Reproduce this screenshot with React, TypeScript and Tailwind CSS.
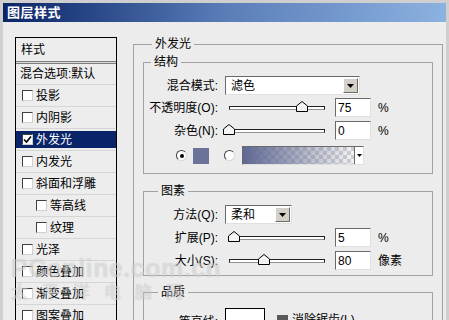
import React from "react";

const font = "font-['Liberation_Sans','Noto_Sans_CJK_SC',sans-serif]";

function Check({ on = false }: { on?: boolean }) {
  return (
    <span className="inline-flex h-[11px] w-[11px] shrink-0 items-center justify-center border border-t-[#404040] border-l-[#404040] border-r-[#d0d0d0] border-b-[#d0d0d0] bg-white">
      {on && (
        <svg width="9" height="9" viewBox="0 0 9 9">
          <path d="M1 4.5 L3.5 7 L8 1.5" fill="none" stroke="#000" strokeWidth="1.6" />
        </svg>
      )}
    </span>
  );
}

function Radio({ on = false }: { on?: boolean }) {
  return (
    <span className="inline-flex h-[11px] w-[11px] shrink-0 items-center justify-center rounded-full border border-t-[#404040] border-l-[#404040] border-r-[#d8d8d8] border-b-[#d8d8d8] bg-white">
      {on && <span className="h-[4px] w-[4px] rounded-full bg-black" />}
    </span>
  );
}

function Arrow() {
  return (
    <span className="flex h-[15px] w-[15px] shrink-0 items-center justify-center border border-t-white border-l-white border-r-[#6a6a6a] border-b-[#6a6a6a] bg-[#d4d0c8]">
      <svg width="7" height="4" viewBox="0 0 7 4">
        <path d="M0 0 H7 L3.5 4 Z" fill="#000" />
      </svg>
    </span>
  );
}

function Select({ value, w }: { value: string; w: string }) {
  return (
    <div className={`flex h-[19px] items-center justify-between border border-t-[#6a6a6a] border-l-[#6a6a6a] border-r-[#e0e0e0] border-b-[#e0e0e0] bg-white pl-[5px] pr-[1px] ${w}`}>
      <span className="text-[12px] leading-none text-black">{value}</span>
      <Arrow />
    </div>
  );
}

function Slider({ pos }: { pos: number }) {
  return (
    <div className="relative ml-[4px] h-[12px] w-[96px] shrink-0">
      <div className="absolute left-0 right-0 top-[4px] h-[4px] border border-[#202020] border-b-[#909090] bg-white" />
      <svg
        className="absolute top-[-1px]"
        style={{ left: pos - 6 }}
        width="12"
        height="11"
        viewBox="0 0 12 11"
      >
        <path d="M6 0.5 L11.5 5 V10.5 H0.5 V5 Z" fill="#f4f4f4" stroke="#000" />
      </svg>
    </div>
  );
}

function Field({ value }: { value: string }) {
  return (
    <div className="ml-[10px] flex h-[19px] w-[36px] items-center border border-t-[#6a6a6a] border-l-[#6a6a6a] border-r-[#e0e0e0] border-b-[#e0e0e0] bg-white pl-[2px] text-[12px] leading-none">
      {value}
    </div>
  );
}

function SliderRow({ label, pos, value, unit }: { label: string; pos: number; value: string; unit: string }) {
  return (
    <div className="flex h-[19px] items-center">
      <span className="w-[74px] text-right text-[12px] leading-none">{label}</span>
      <span className="w-[7px]" />
      <Slider pos={pos} />
      <Field value={value} />
      <span className="ml-[7px] text-[12px] leading-none">{unit}</span>
    </div>
  );
}

const list: { label: string; sub?: boolean; on?: boolean }[] = [
  { label: "投影" },
  { label: "内阴影" },
  { label: "外发光", on: true },
  { label: "内发光" },
  { label: "斜面和浮雕" },
  { label: "等高线", sub: true },
  { label: "纹理", sub: true },
  { label: "光泽" },
  { label: "颜色叠加" },
  { label: "渐变叠加" },
  { label: "图案叠加" },
];

export default function App() {
  return (
    <div className={`relative h-[320px] w-[449px] overflow-hidden border-l-[3px] border-r-[3px] border-t-[3px] border-[#cfcfcf] bg-[#ececec] text-black ${font}`}>
      {/* title bar */}
      <div className="flex h-[19px] items-center bg-gradient-to-r from-[#0c2466] via-[#5a7db8] to-[#8cb2e0] pl-[4px]">
        <span className="text-[13px] font-bold leading-none tracking-[0.5px] text-white">图层样式</span>
      </div>

      <div className="flex items-start">
        {/* style list */}
        <div className="ml-[12px] mt-[15px] w-[102px] shrink-0 border border-black bg-[#ededed]">
          <div className="flex h-[23px] items-center pl-[5px] text-[12px]">样式</div>
          <div className="h-[3px] border-y border-[#808080] bg-[#d8d8d8]" />
          <div className="flex h-[21px] items-center border-b border-[#d6d6d6] pl-[4px] text-[12px]">混合选项:默认</div>
          {list.map((it) => (
            <div key={it.label} className="h-[22px] border-b border-[#d6d6d6] py-[2px]">
              <div
                className={`flex h-full items-center gap-[3px] text-[12px] ${it.sub ? "pl-[20px]" : "pl-[6px]"} ${it.on ? "bg-[#0a246a] text-white" : ""}`}
              >
                <Check on={it.on} />
                <span>{it.label}</span>
              </div>
            </div>
          ))}
        </div>

        {/* options */}
        <fieldset className="ml-[16px] mt-[14px] h-[330px] w-[310px] shrink-0 border border-[#a2a2a2] px-[9px]">
          <legend className="ml-[9px] px-[3px] text-[12px] leading-[16px]">外发光</legend>

          <fieldset className="mt-[2px] border border-[#a2a2a2] pb-[8px] pt-[6px]">
            <legend className="ml-[7px] px-[3px] text-[12px] leading-[16px]">结构</legend>
            <div className="flex h-[19px] items-center">
              <span className="w-[74px] text-right text-[12px] leading-none">混合模式:</span>
              <span className="w-[7px]" />
              <Select value="滤色" w="w-[135px]" />
            </div>
            <div className="mt-[3px]">
              <SliderRow label="不透明度(O):" pos={73} value="75" unit="%" />
            </div>
            <div className="mt-[4px]">
              <SliderRow label="杂色(N):" pos={0} value="0" unit="%" />
            </div>
            <div className="mt-[6px] flex h-[19px] items-center pl-[32px]">
              <Radio on />
              <span className="ml-[6px] h-[16px] w-[16px] bg-[#6b7398]" />
              <span className="ml-[15px]">
                <Radio />
              </span>
              <div className="ml-[7px] flex h-[19px] w-[122px] items-center border border-t-[#6a6a6a] border-l-[#6a6a6a] border-r-[#e0e0e0] border-b-[#e0e0e0] bg-white">
                <div className="h-full flex-1 bg-[conic-gradient(#cfcfcf_25%,#f4f4f4_0_50%,#cfcfcf_0_75%,#f4f4f4_0)] bg-[length:8px_8px]">
                  <div className="h-full w-full bg-gradient-to-r from-[#5f6893] to-transparent" />
                </div>
                <span className="flex h-full w-[9px] items-center justify-center border-l border-[#6a6a6a] bg-white">
                  <svg width="5" height="3" viewBox="0 0 5 3">
                    <path d="M0 0 H5 L2.5 3 Z" fill="#000" />
                  </svg>
                </span>
              </div>
            </div>
          </fieldset>

          <fieldset className="mt-[9px] border border-[#a2a2a2] pb-[5px] pt-[6px]">
            <legend className="ml-[14px] px-[3px] text-[12px] leading-[16px]">图素</legend>
            <div className="flex h-[19px] items-center">
              <span className="w-[74px] text-right text-[12px] leading-none">方法(Q):</span>
              <span className="w-[7px]" />
              <Select value="柔和" w="w-[67px]" />
            </div>
            <div className="mt-[4px]">
              <SliderRow label="扩展(P):" pos={5} value="5" unit="%" />
            </div>
            <div className="mt-[4px]">
              <SliderRow label="大小(S):" pos={35} value="80" unit="像素" />
            </div>
          </fieldset>

          <fieldset className="mt-[8px] border border-[#a2a2a2] pt-[8px]">
            <legend className="ml-[14px] px-[3px] text-[12px] leading-[16px]">品质</legend>
            <div className="flex items-start">
              <span className="w-[74px] pt-[8px] text-right text-[12px] leading-none">等高线:</span>
              <span className="w-[7px]" />
              <div className="relative h-[34px] w-[40px] border border-black bg-white">
                <svg className="absolute bottom-0 right-0" width="20" height="20" viewBox="0 0 20 20">
                  <path d="M0 20 L20 0 V20 Z" fill="#8a8a8a" />
                </svg>
              </div>
              <div className="ml-[12px] flex items-center gap-[4px] pt-[3px] text-[12px]">
                <span className="h-[11px] w-[11px] bg-[#5a5a5a]" />
                <span>消除锯齿(L)</span>
              </div>
            </div>
          </fieldset>
        </fieldset>
      </div>

      {/* watermark */}
      <div className="pointer-events-none absolute left-[8px] top-[252px] select-none text-white/45 [text-shadow:0_0_1px_rgba(0,0,0,0.2)]">
        <div className="font-['Liberation_Sans',sans-serif] text-[25px] font-bold leading-[26px] tracking-[0.5px]">PConline.com.cn</div>
        <div className="font-['Noto_Sans_CJK_SC',sans-serif] text-[17px] font-bold leading-[20px] tracking-[14px]">太平洋电脑网</div>
      </div>
    </div>
  );
}
